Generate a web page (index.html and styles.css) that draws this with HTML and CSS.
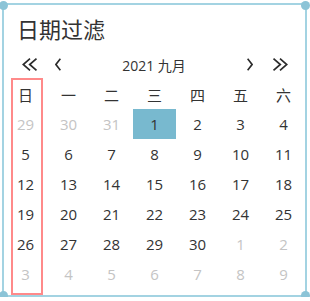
FILE: index.html
```html
<!DOCTYPE html>
<html lang="zh-CN">
<head>
<meta charset="UTF-8">
<meta name="viewport" content="width=device-width, initial-scale=1.0">
<title>日期过滤</title>
<link rel="stylesheet" href="styles.css">
</head>
<body>

<div class="frame">
    <span class="handle tl"></span>
    <span class="handle tr"></span>
    <span class="handle bl"></span>
    <span class="handle br"></span>

    <div class="title">日期过滤</div>

    <div class="nav">
        <div class="navGroup">
            <svg class="icon" width="16" height="13" viewBox="0 0 16 13"><path d="M8 0.7 L1.2 6.5 L8 12.3 M14.5 0.7 L7.7 6.5 L14.5 12.3"/></svg>
            <svg class="icon" width="6" height="13" viewBox="0 0 6 13"><path d="M5.4 0.7 L0.9 6.5 L5.4 12.3"/></svg>
        </div>
        <div class="month">2021 九月</div>
        <div class="navGroup right">
            <svg class="icon" width="6" height="13" viewBox="0 0 6 13"><path d="M0.6 0.7 L5.1 6.5 L0.6 12.3"/></svg>
            <svg class="icon" width="16" height="13" viewBox="0 0 16 13"><path d="M1.5 0.7 L8.3 6.5 L1.5 12.3 M8 0.7 L14.8 6.5 L8 12.3"/></svg>
        </div>
    </div>

    <div class="grid">
        <div class="weekday">日</div>
        <div class="weekday">一</div>
        <div class="weekday">二</div>
        <div class="weekday">三</div>
        <div class="weekday">四</div>
        <div class="weekday">五</div>
        <div class="weekday">六</div>

        <div class="day other">29</div>
        <div class="day other">30</div>
        <div class="day other">31</div>
        <div class="day selected">1</div>
        <div class="day">2</div>
        <div class="day">3</div>
        <div class="day">4</div>

        <div class="day">5</div>
        <div class="day">6</div>
        <div class="day">7</div>
        <div class="day">8</div>
        <div class="day">9</div>
        <div class="day">10</div>
        <div class="day">11</div>

        <div class="day">12</div>
        <div class="day">13</div>
        <div class="day">14</div>
        <div class="day">15</div>
        <div class="day">16</div>
        <div class="day">17</div>
        <div class="day">18</div>

        <div class="day">19</div>
        <div class="day">20</div>
        <div class="day">21</div>
        <div class="day">22</div>
        <div class="day">23</div>
        <div class="day">24</div>
        <div class="day">25</div>

        <div class="day">26</div>
        <div class="day">27</div>
        <div class="day">28</div>
        <div class="day">29</div>
        <div class="day">30</div>
        <div class="day other">1</div>
        <div class="day other">2</div>

        <div class="day other">3</div>
        <div class="day other">4</div>
        <div class="day other">5</div>
        <div class="day other">6</div>
        <div class="day other">7</div>
        <div class="day other">8</div>
        <div class="day other">9</div>
    </div>

    <div class="columnMark"></div>
</div>

</body>
</html>
```

FILE: styles.css
```css
body {
    margin: 0;
    background: #fff;
    font-family: "Open Sans", "Noto Sans CJK SC", sans-serif;
    color: #333;
}

.frame {
    position: relative; /* uchwyty i ramka kolumny leza nad trescia */
    box-sizing: border-box;
    width: 305px;
    height: 294px;
    margin: 3px 0 0 2px;
    border: 2px solid #a3d3e2;
}

.handle {
    position: absolute;
    width: 9px;
    height: 9px;
    border-radius: 50%;
    background: #8cc4d7;
}

.handle.tl { left: -5px; top: -4px; }
.handle.tr { right: -5px; top: -4px; }
.handle.bl { left: -5px; bottom: -5px; }
.handle.br { right: -5px; bottom: -5px; }

.title {
    margin: 8px 0 0 13px;
    height: 30px;
    line-height: 30px;
    font-family: "Noto Sans CJK SC", sans-serif;
    font-size: 22px;
    color: #333;
}

.nav {
    display: flex;
    align-items: center;
    height: 29px;
    margin-top: 7px;
    padding: 0 17px 0 18px;
}

.navGroup {
    display: flex;
    align-items: center;
    gap: 17px;
}

.navGroup.right {
    gap: 19px;
}

.icon path {
    fill: none;
    stroke: #2b2b2b;
    stroke-width: 1.7;
}

.month {
    flex: 1;
    text-align: center;
    font-size: 14px;
    color: #333;
}

.grid {
    display: grid;
    grid-template-columns: repeat(7, 43px);
    grid-auto-rows: 30px;
}

.weekday,
.day {
    display: flex;
    justify-content: center;
    align-items: center;
    font-size: 15px;
}

.weekday {
    font-family: "Noto Sans CJK SC", sans-serif;
}

.day.other {
    color: #c4c4c4;
}

.day.selected {
    background: #78b9cf;
}

.columnMark {
    position: absolute; /* zaznaczenie kolumny niedziel */
    left: 7px;
    top: 73px;
    box-sizing: border-box;
    width: 32px;
    height: 217px;
    border: 2px solid #ff8a8a;
}
```
